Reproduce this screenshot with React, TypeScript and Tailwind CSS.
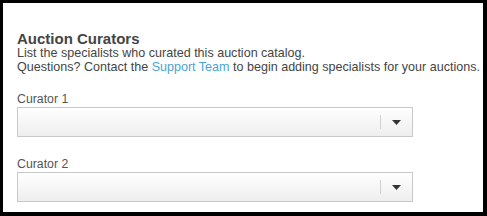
export default function App() {
  const curators = ['Curator 1', 'Curator 2']

  return (
    <div
      className="w-[487px] h-[216px] bg-white border-black border-l-[3px] border-t-[3px] border-r-[4px] border-b-[4px] overflow-hidden"
      style={{ fontFamily: '"Liberation Sans", Arial, sans-serif' }}
    >
      <div className="pl-[14px] pt-[28px]">
        <h2 className="text-[15px] leading-[15px] font-bold text-[#444]">Auction Curators</h2>
        <p className="text-[12.55px] leading-[14px] text-[#444]">
          List the specialists who curated this auction catalog.
          <br />
          Questions? Contact the{' '}
          <a href="#" className="text-[#4aa3d6]">
            Support Team
          </a>{' '}
          to begin adding specialists for your auctions.
        </p>

        <div className="mt-[18px] flex flex-col gap-[20px]">
          {curators.map((label) => (
            <div key={label}>
              <label className="block text-[12.3px] leading-[14px] text-[#555] mb-px">{label}</label>
              <div className="w-[396px] h-[30px] flex items-center justify-end border border-[#c8c8c8] bg-gradient-to-b from-white to-[#eeeeee]">
                <span className="w-px h-[14px] bg-[#d0d0d0]" />
                <span className="w-[31px] flex justify-center">
                  <svg width="9" height="5" viewBox="0 0 9 5">
                    <path d="M0 0h9L4.5 5z" fill="#333" />
                  </svg>
                </span>
              </div>
            </div>
          ))}
        </div>
      </div>
    </div>
  )
}
